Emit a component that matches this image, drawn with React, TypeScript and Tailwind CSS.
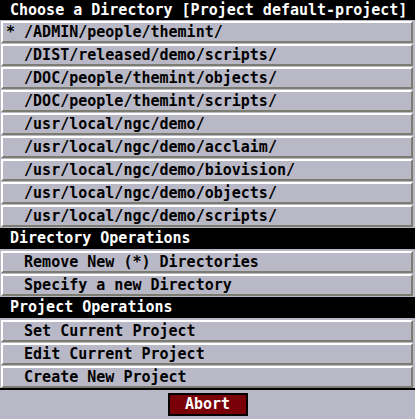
const dirs = [
  '* /ADMIN/people/themint/',
  '  /DIST/released/demo/scripts/',
  '  /DOC/people/themint/objects/',
  '  /DOC/people/themint/scripts/',
  '  /usr/local/ngc/demo/',
  '  /usr/local/ngc/demo/acclaim/',
  '  /usr/local/ngc/demo/biovision/',
  '  /usr/local/ngc/demo/objects/',
  '  /usr/local/ngc/demo/scripts/',
]

const dirOps = ['  Remove New (*) Directories', '  Specify a new Directory']
const projOps = ['  Set Current Project', '  Edit Current Project', '  Create New Project']

function Row({ label }: { label: string }) {
  return (
    <div className="h-[23px] pl-[1px] pr-[2px] pt-[1px]">
      <div className="h-[22px] border-t-2 border-l-2 border-t-white border-l-white border-b-2 border-r-2 border-b-[#7c7c70] border-r-[#7c7c70] flex items-center pl-[3px] whitespace-pre text-black">
        {label}
      </div>
    </div>
  )
}

function Header({ label }: { label: string }) {
  return (
    <div className="h-[23px] pt-[1px] pb-[1px]">
      <div className="h-[21px] bg-black text-white flex items-center pl-[10px] whitespace-pre">{label}</div>
    </div>
  )
}

export default function App() {
  return (
    <div
      className="w-[415px] h-[419px] bg-[#b8b8c6] flex flex-col text-[15px] font-bold leading-none overflow-hidden"
      style={{ fontFamily: '"DejaVu Sans Mono", monospace' }}
    >
      <div className="h-[20px] bg-black text-white flex items-center pl-[10px] whitespace-pre">
        Choose a Directory [Project default-project]
      </div>
      {dirs.map((d) => (
        <Row key={d} label={d} />
      ))}
      <Header label="Directory Operations" />
      {dirOps.map((d) => (
        <Row key={d} label={d} />
      ))}
      <Header label="Project Operations" />
      {projOps.map((d) => (
        <Row key={d} label={d} />
      ))}
      <div className="flex-1 border-t-2 border-black flex items-center justify-center">
        <button className="w-[80px] h-[23px] bg-[#7a0008] border-2 border-black text-white font-bold">Abort</button>
      </div>
    </div>
  )
}
